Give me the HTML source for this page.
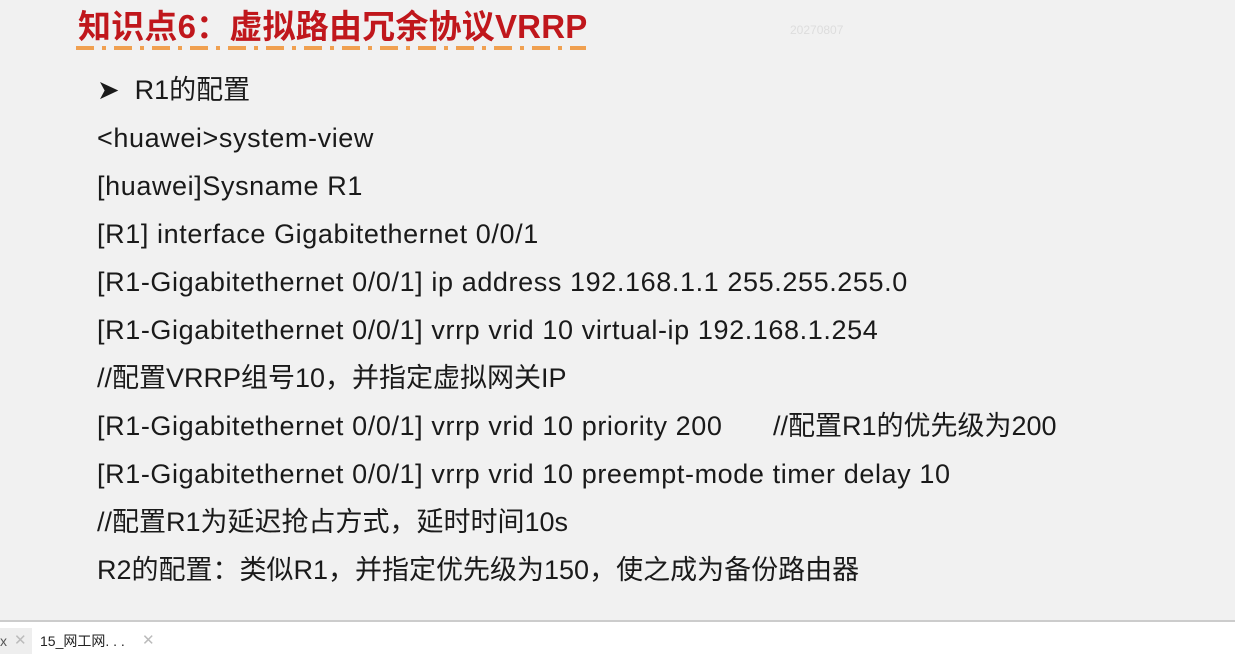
<!DOCTYPE html>
<html><head><meta charset="utf-8"><style>
body{margin:0;width:1235px;height:658px;background:#f1f1f1;overflow:hidden;position:relative;font-family:"Liberation Sans","Noto Sans CJK SC",sans-serif;}
.t{position:absolute;left:78px;top:0px;font-size:33px;font-weight:bold;color:#c0171c;white-space:nowrap;letter-spacing:0.2px}
.dash{position:absolute;left:76px;top:46px;width:510px;height:4px;background:repeating-linear-gradient(90deg,#f0a050 0 18px,transparent 18px 26px,#f0a050 26px 30px,transparent 30px 38px);}
.wm{position:absolute;left:790px;top:23px;font-size:12px;color:#ddd}
.l{position:absolute;left:97px;font-size:27px;letter-spacing:0.6px;color:#1a1a1a;white-space:nowrap;line-height:30px}
.c{letter-spacing:0}
.bar{position:absolute;left:0;top:620px;width:1235px;height:2px;background:#ccc}
.tabs{position:absolute;left:0;top:622px;width:1235px;height:36px;background:#fff}
.tab1{position:absolute;left:0;top:628px;width:32px;height:26px;background:#eee;font-size:14px;color:#555;line-height:26px}
.tab2{position:absolute;left:40px;top:628px;font-size:14px;color:#222;line-height:26px}
.x{position:absolute;top:628px;font-size:15px;color:#bbb;line-height:26px}
</style></head><body>
<div class="t">知识点6：虚拟路由冗余协议VRRP</div>
<div class="dash"></div>
<div class="wm">20270807</div>
<div class="l c" style="top:75px">&#10148;&nbsp; R1的配置</div>
<div class="l" style="top:123px">&lt;huawei&gt;system-view</div>
<div class="l" style="top:171px">[huawei]Sysname R1</div>
<div class="l" style="top:219px">[R1] interface Gigabitethernet 0/0/1</div>
<div class="l" style="top:267px">[R1-Gigabitethernet 0/0/1] ip address 192.168.1.1 255.255.255.0</div>
<div class="l" style="top:315px">[R1-Gigabitethernet 0/0/1] vrrp vrid 10 virtual-ip 192.168.1.254</div>
<div class="l c" style="top:363px">//配置VRRP组号10，并指定虚拟网关IP</div>
<div class="l" style="top:411px">[R1-Gigabitethernet 0/0/1] vrrp vrid 10 priority 200<span class="c" style="position:absolute;left:676px">//配置R1的优先级为200</span></div>
<div class="l" style="top:459px">[R1-Gigabitethernet 0/0/1] vrrp vrid 10 preempt-mode timer delay 10</div>
<div class="l c" style="top:507px">//配置R1为延迟抢占方式，延时时间10s</div>
<div class="l c" style="top:555px">R2的配置：类似R1，并指定优先级为150，使之成为备份路由器</div>
<div class="bar"></div>
<div class="tabs"></div>
<div class="tab1">x</div>
<div class="x" style="left:14px">✕</div>
<div class="tab2">15_网工网. . .</div>
<div class="x" style="left:142px">✕</div>
</body></html>
